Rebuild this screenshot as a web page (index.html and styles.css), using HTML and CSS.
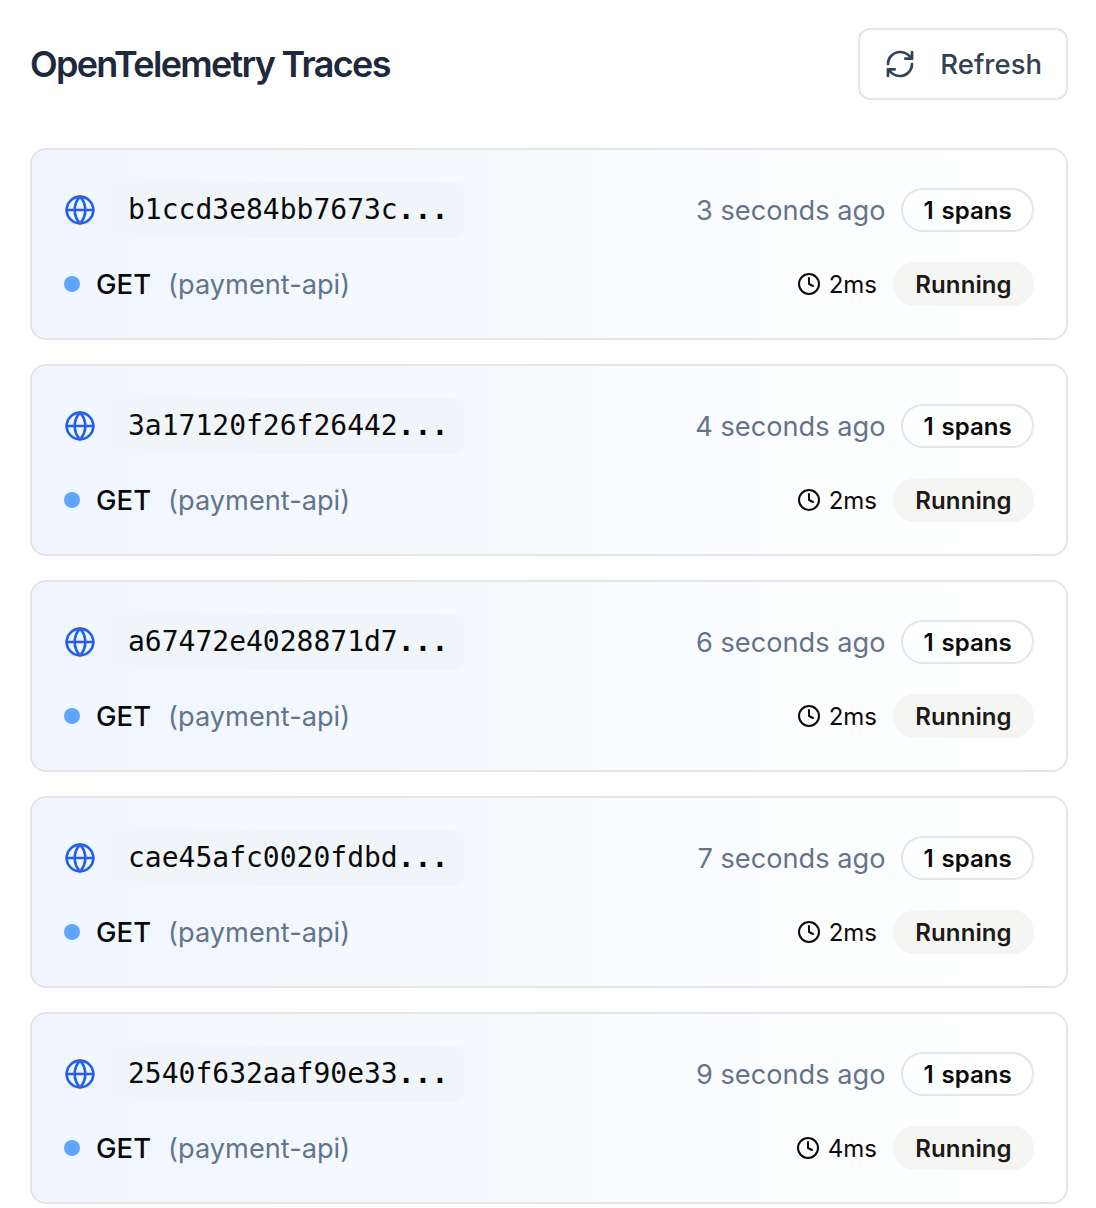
FILE: index.html
```html
<!DOCTYPE html>
<html lang="en">
<head>
<meta charset="utf-8">
<title>OpenTelemetry Traces</title>
<link rel="stylesheet" href="styles.css">
</head>
<body>
<svg class="sprite" aria-hidden="true">
  <symbol id="globe" viewBox="0 0 24 24"><circle cx="12" cy="12" r="10"/><path d="M12 2a14.5 14.5 0 0 0 0 20 14.5 14.5 0 0 0 0-20"/><path d="M2 12h20"/></symbol>
  <symbol id="clock" viewBox="0 0 24 24"><circle cx="12" cy="12" r="10"/><path d="M12 6v6l4 2"/></symbol>
  <symbol id="refresh" viewBox="0 0 24 24"><path d="M3 12a9 9 0 0 1 9-9 9.75 9.75 0 0 1 6.74 2.74L21 8"/><path d="M21 3v5h-5"/><path d="M21 12a9 9 0 0 1-9 9 9.75 9.75 0 0 1-6.74-2.74L3 16"/><path d="M8 16H3v5"/></symbol>
</svg>
<main class="page">
  <header class="header">
    <h1 class="title">OpenTelemetry Traces</h1>
    <button class="refresh"><svg class="icon refresh-icon"><use href="#refresh"/></svg><span>Refresh</span></button>
  </header>
  <section class="traces">
    <article class="card">
      <div class="row"><svg class="icon globe"><use href="#globe"/></svg><code class="trace-id">b1ccd3e84bb7673c<b>...</b></code><span class="age">3 seconds ago</span><span class="badge outline">1 spans</span></div>
      <div class="row detail"><i class="dot"></i><span class="method">GET</span><span class="service">(payment-api)</span><svg class="icon clock"><use href="#clock"/></svg><span class="duration">2ms</span><span class="badge running">Running</span></div>
    </article>
    <article class="card">
      <div class="row"><svg class="icon globe"><use href="#globe"/></svg><code class="trace-id">3a17120f26f26442<b>...</b></code><span class="age">4 seconds ago</span><span class="badge outline">1 spans</span></div>
      <div class="row detail"><i class="dot"></i><span class="method">GET</span><span class="service">(payment-api)</span><svg class="icon clock"><use href="#clock"/></svg><span class="duration">2ms</span><span class="badge running">Running</span></div>
    </article>
    <article class="card">
      <div class="row"><svg class="icon globe"><use href="#globe"/></svg><code class="trace-id">a67472e4028871d7<b>...</b></code><span class="age">6 seconds ago</span><span class="badge outline">1 spans</span></div>
      <div class="row detail"><i class="dot"></i><span class="method">GET</span><span class="service">(payment-api)</span><svg class="icon clock"><use href="#clock"/></svg><span class="duration">2ms</span><span class="badge running">Running</span></div>
    </article>
    <article class="card">
      <div class="row"><svg class="icon globe"><use href="#globe"/></svg><code class="trace-id">cae45afc0020fdbd<b>...</b></code><span class="age">7 seconds ago</span><span class="badge outline">1 spans</span></div>
      <div class="row detail"><i class="dot"></i><span class="method">GET</span><span class="service">(payment-api)</span><svg class="icon clock"><use href="#clock"/></svg><span class="duration">2ms</span><span class="badge running">Running</span></div>
    </article>
    <article class="card">
      <div class="row"><svg class="icon globe"><use href="#globe"/></svg><code class="trace-id">2540f632aaf90e33<b>...</b></code><span class="age">9 seconds ago</span><span class="badge outline">1 spans</span></div>
      <div class="row detail"><i class="dot"></i><span class="method">GET</span><span class="service">(payment-api)</span><svg class="icon clock"><use href="#clock"/></svg><span class="duration">4ms</span><span class="badge running">Running</span></div>
    </article>
  </section>
</main>
</body>
</html>
```
FILE: styles.css
```css
* { box-sizing: border-box; }
body { margin: 0; background: #fff; color: #0c0a09; font-family: Inter, sans-serif; }
.sprite { position: absolute; width: 0; height: 0; }
.page { padding: 28px 28px 0 30px; }
.header { display: flex; justify-content: space-between; align-items: center; height: 72px; margin-bottom: 48px; }
.title { margin: 0; font-size: 36px; line-height: 56px; font-weight: 600; letter-spacing: -1.7px; color: #1e293b; white-space: nowrap; }
.icon { flex: none; fill: none; stroke: currentColor; stroke-width: 2; stroke-linecap: round; stroke-linejoin: round; }
.refresh { display: flex; align-items: center; justify-content: space-between; width: 210px; height: 72px; padding: 0 24px; border: 2px solid #e5e5e5; border-radius: 12px; background: #fff; color: #334155; font: 500 27.5px/40px Inter, sans-serif; }
.refresh-icon { width: 32px; height: 32px; }
.traces { display: grid; gap: 24px; }
.card { height: 192px; padding: 32px; border: 2px solid #e5e5e5; border-radius: 16px; background: linear-gradient(to right, #eff6ff, #fff); }
.row { display: flex; align-items: center; height: 56px; }
.detail { height: 44px; margin-top: 24px; }
.globe { width: 32px; height: 32px; color: #255feb; }
.trace-id { width: 352px; height: 56px; margin-left: 16px; padding: 0 16px; border-radius: 8px; background: #f1f5f9; font: 28px/56px "DejaVu Sans Mono", monospace; white-space: nowrap; }
.age { margin-left: auto; margin-right: 15.5px; padding-top: 2px; font-size: 27.2px; line-height: 40px; color: #64748b; }
.badge { display: flex; align-items: center; justify-content: center; height: 44px; border-radius: 22px; font-size: 24px; font-weight: 600; }
.outline { width: 133px; border: 2px solid #e5e5e5; word-spacing: 2px; }
.running { width: 141px; background: #f5f5f4; color: #1c1917; letter-spacing: .1px; }
.dot { width: 16px; height: 16px; border-radius: 50%; background: #60a5fa; }
.method { margin-left: 16px; font-size: 27.5px; line-height: 40px; font-weight: 500; }
.service { margin-left: 17px; padding-top: 2px; font-size: 27.2px; line-height: 40px; color: #64748b; }
.clock { width: 24px; height: 24px; margin-left: auto; }
.duration { margin: 0 16px 0 8px; font-size: 24px; }
```
